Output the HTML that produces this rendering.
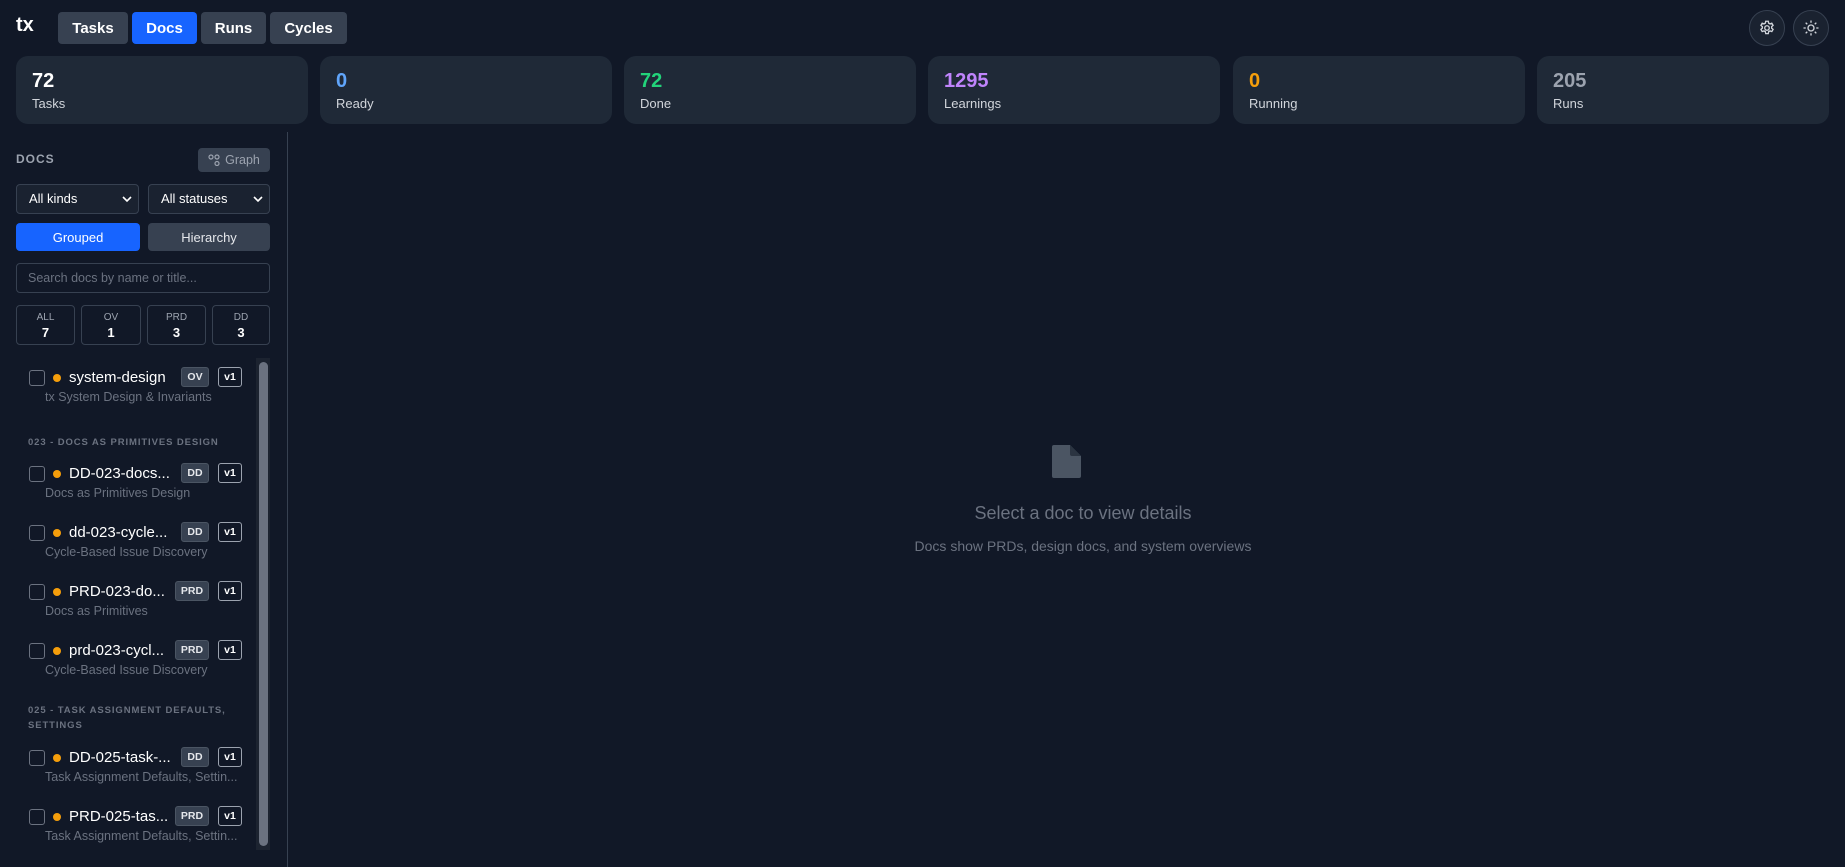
<!DOCTYPE html>
<html><head><meta charset="utf-8"><style>
*{box-sizing:border-box;margin:0;padding:0}
body{width:1845px;height:867px;background:#111827;font-family:"Liberation Sans",sans-serif;color:#fff;position:relative;overflow:hidden}
.a{position:absolute}
.nav{top:12px;height:32px;border-radius:4px;background:#374151;color:#fff;font-weight:bold;font-size:15px;display:flex;align-items:center;justify-content:center}
.card{top:56px;height:68px;width:292px;background:#1f2937;border-radius:12px}
.card .n{position:absolute;left:16px;top:14px;font-size:20px;font-weight:bold}
.card .l{position:absolute;left:16px;top:40px;font-size:13px;color:#d1d5db}
.sel{top:184px;height:30px;border:1px solid #374151;border-radius:4px;background:#1a2230;font-size:13px;color:#fff;padding-left:12px;line-height:28px}
.sel svg{position:absolute;right:6px;top:10px}
.cnt{top:305px;height:40px;border:1px solid #374151;border-radius:4px;text-align:center}
.cnt .t{font-size:10px;color:#9ca3af;margin-top:6px}
.cnt .v{font-size:13px;font-weight:bold;margin-top:2px}
.cb{width:16px;height:16px;border:1.5px solid #6b7280;border-radius:3px;left:29px}
.dot{width:8px;height:8px;border-radius:50%;background:#f59e0b;left:53px}
.nm{left:69px;font-size:15px;color:#fff;white-space:nowrap}
.sub{left:45px;font-size:12.5px;color:#6b7280;white-space:nowrap}
.bd{height:20px;border-radius:3px;background:#374151;border:1px solid #4b5563;font-size:10.5px;font-weight:bold;color:#e5e7eb;display:flex;align-items:center;justify-content:center}
.v1{left:218px;width:24px;height:20px;border-radius:3px;border:1px solid #9ca3af;font-size:10.5px;font-weight:bold;display:flex;align-items:center;justify-content:center}
.gh{left:28px;font-size:9.5px;letter-spacing:0.9px;color:#6b7280;font-weight:bold;line-height:15px}
.circ{top:10px;width:36px;height:36px;border-radius:50%;border:1px solid #374151;background:#1a2230;display:flex;align-items:center;justify-content:center}
</style></head><body>
<div class="a" style="left:16px;top:14px;font-size:20px;font-weight:bold">tx</div>
<div class="a nav" style="left:58px;width:70px">Tasks</div>
<div class="a nav" style="left:132px;width:65px;background:#1764ff">Docs</div>
<div class="a nav" style="left:201px;width:65px">Runs</div>
<div class="a nav" style="left:270px;width:77px">Cycles</div>
<div class="a circ" style="left:1749px"><svg width="18" height="18" viewBox="0 0 24 24" fill="none" stroke="#d1d5db" stroke-width="1.8"><path d="M10.3 3h3.4l.5 2.5 1.8 1 2.4-.9 1.7 2.9-1.9 1.7v2l1.9 1.7-1.7 2.9-2.4-.9-1.8 1-.5 2.6h-3.4l-.5-2.6-1.8-1-2.4.9-1.7-2.9 1.9-1.7v-2L3.9 8.5l1.7-2.9 2.4.9 1.8-1z"/><circle cx="12" cy="12" r="3"/></svg></div>
<div class="a circ" style="left:1793px"><svg width="18" height="18" viewBox="0 0 24 24" fill="none" stroke="#d1d5db" stroke-width="1.8"><circle cx="12" cy="12" r="4"/><path d="M12 2v3M12 19v3M2 12h3M19 12h3M4.9 4.9l2.1 2.1M17 17l2.1 2.1M4.9 19.1L7 17M17 7l2.1-2.1"/></svg></div>

<div class="a card" style="left:16px"><div class="n">72</div><div class="l">Tasks</div></div>
<div class="a card" style="left:320px"><div class="n" style="color:#60a5fa">0</div><div class="l">Ready</div></div>
<div class="a card" style="left:624px"><div class="n" style="color:#22d37a">72</div><div class="l">Done</div></div>
<div class="a card" style="left:928px"><div class="n" style="color:#c084fc">1295</div><div class="l">Learnings</div></div>
<div class="a card" style="left:1233px"><div class="n" style="color:#f59e0b">0</div><div class="l">Running</div></div>
<div class="a card" style="left:1537px"><div class="n" style="color:#9ca3af">205</div><div class="l">Runs</div></div>

<div class="a" style="left:287px;top:132px;width:1px;height:735px;background:#374151"></div>
<div class="a" style="left:16px;top:152px;font-size:12px;letter-spacing:1px;color:#9ca3af;font-weight:bold">DOCS</div>
<div class="a" style="left:198px;top:148px;width:72px;height:24px;border-radius:4px;background:#374151;color:#9ca3af;font-size:12.5px;display:flex;align-items:center;justify-content:center;gap:5px"><svg width="12" height="12" viewBox="0 0 12 12" fill="none" stroke="#9ca3af" stroke-width="1.2"><circle cx="3" cy="3" r="2"/><circle cx="9" cy="3" r="2"/><circle cx="9" cy="9.5" r="2"/></svg>Graph</div>
<div class="a sel" style="left:16px;width:123px">All kinds<svg width="10" height="8" viewBox="0 0 10 8"><path d="M1 2l4 4 4-4" stroke="#fff" stroke-width="1.6" fill="none"/></svg></div>
<div class="a sel" style="left:148px;width:122px">All statuses<svg width="10" height="8" viewBox="0 0 10 8"><path d="M1 2l4 4 4-4" stroke="#fff" stroke-width="1.6" fill="none"/></svg></div>
<div class="a" style="left:16px;top:223px;width:124px;height:28px;border-radius:4px;background:#1764ff;font-size:13px;display:flex;align-items:center;justify-content:center">Grouped</div>
<div class="a" style="left:148px;top:223px;width:122px;height:28px;border-radius:4px;background:#374151;font-size:13px;color:#e5e7eb;display:flex;align-items:center;justify-content:center">Hierarchy</div>
<div class="a" style="left:16px;top:263px;width:254px;height:30px;border:1px solid #374151;border-radius:4px;font-size:12.5px;color:#6b7280;padding-left:11px;line-height:28px">Search docs by name or title...</div>
<div class="a cnt" style="left:16px;width:59px"><div class="t">ALL</div><div class="v">7</div></div>
<div class="a cnt" style="left:81px;width:60px"><div class="t">OV</div><div class="v">1</div></div>
<div class="a cnt" style="left:147px;width:59px"><div class="t">PRD</div><div class="v">3</div></div>
<div class="a cnt" style="left:212px;width:58px"><div class="t">DD</div><div class="v">3</div></div>

<div class="a" style="left:256px;top:358px;width:14px;height:492px;background:#1c2330"></div>
<div class="a" style="left:259px;top:362px;width:9px;height:484px;border-radius:5px;background:#6b7280"></div>

<div class="a cb" style="top:370px"></div><div class="a dot" style="top:374px"></div><div class="a nm" style="top:369px">system-design</div><div class="a bd" style="left:181px;top:367px;width:28px">OV</div><div class="a v1" style="top:367px">v1</div><div class="a sub" style="top:390px">tx System Design &amp; Invariants</div>

<div class="a gh" style="top:435px">023 - DOCS AS PRIMITIVES DESIGN</div>

<div class="a cb" style="top:466px"></div><div class="a dot" style="top:470px"></div><div class="a nm" style="top:465px">DD-023-docs...</div><div class="a bd" style="left:181px;top:463px;width:28px">DD</div><div class="a v1" style="top:463px">v1</div><div class="a sub" style="top:486px">Docs as Primitives Design</div>

<div class="a cb" style="top:525px"></div><div class="a dot" style="top:529px"></div><div class="a nm" style="top:524px">dd-023-cycle...</div><div class="a bd" style="left:181px;top:522px;width:28px">DD</div><div class="a v1" style="top:522px">v1</div><div class="a sub" style="top:545px">Cycle-Based Issue Discovery</div>

<div class="a cb" style="top:584px"></div><div class="a dot" style="top:588px"></div><div class="a nm" style="top:583px">PRD-023-do...</div><div class="a bd" style="left:175px;top:581px;width:34px">PRD</div><div class="a v1" style="top:581px">v1</div><div class="a sub" style="top:604px">Docs as Primitives</div>

<div class="a cb" style="top:643px"></div><div class="a dot" style="top:647px"></div><div class="a nm" style="top:642px">prd-023-cycl...</div><div class="a bd" style="left:175px;top:640px;width:34px">PRD</div><div class="a v1" style="top:640px">v1</div><div class="a sub" style="top:663px">Cycle-Based Issue Discovery</div>

<div class="a gh" style="top:703px">025 - TASK ASSIGNMENT DEFAULTS,<br>SETTINGS</div>

<div class="a cb" style="top:750px"></div><div class="a dot" style="top:754px"></div><div class="a nm" style="top:749px">DD-025-task-...</div><div class="a bd" style="left:181px;top:747px;width:28px">DD</div><div class="a v1" style="top:747px">v1</div><div class="a sub" style="top:770px">Task Assignment Defaults, Settin...</div>

<div class="a cb" style="top:809px"></div><div class="a dot" style="top:813px"></div><div class="a nm" style="top:808px">PRD-025-tas...</div><div class="a bd" style="left:175px;top:806px;width:34px">PRD</div><div class="a v1" style="top:806px">v1</div><div class="a sub" style="top:829px">Task Assignment Defaults, Settin...</div>

<svg class="a" style="left:1052px;top:445px" width="29" height="33" viewBox="0 0 29 33"><path d="M2 0h16l11 11v20a2 2 0 0 1-2 2H2a2 2 0 0 1-2-2V2a2 2 0 0 1 2-2z" fill="#4b5563"/><path d="M18 0v9a2 2 0 0 0 2 2h9z" fill="#2b3441"/></svg>
<div class="a" style="left:888px;top:503px;width:390px;text-align:center;font-size:18px;color:#6b7280">Select a doc to view details</div>
<div class="a" style="left:858px;top:538px;width:450px;text-align:center;font-size:14px;color:#6b7280">Docs show PRDs, design docs, and system overviews</div>
</body></html>
